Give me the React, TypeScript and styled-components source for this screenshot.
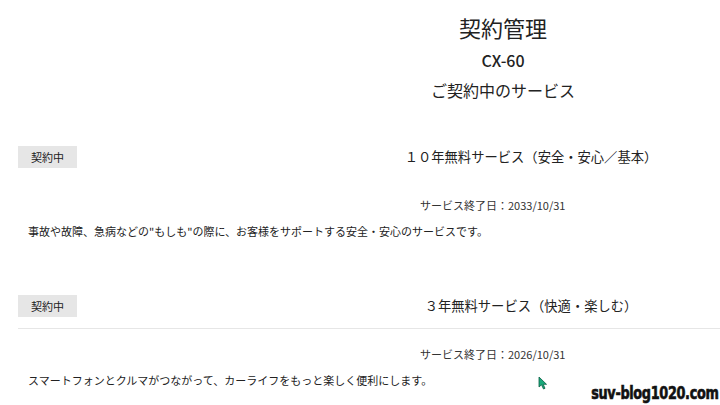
import styled, { createGlobalStyle } from "styled-components";

const GlobalStyle = createGlobalStyle`
  html, body {
    margin: 0;
    padding: 0;
    background: #fff;
  }
  body {
    font-family: "Noto Sans CJK JP", "Noto Sans", sans-serif;
    color: #222;
  }
`;

const Page = styled.div`
  position: relative;
  width: 720px;
  height: 405px;
  overflow: hidden;
  background: #fff;
`;

const Header = styled.header`
  display: flex;
  flex-direction: column;
  align-items: center;
  padding: 14px 0 0 286px;
`;

const Title = styled.h1`
  margin: 0;
  font-size: 22px;
  line-height: 26px;
  font-weight: 400;
`;

const Model = styled.div`
  margin-top: 9px;
  font-family: "Noto Sans CJK JP", "Noto Sans", sans-serif;
  font-size: 16px;
  line-height: 22px;
  font-weight: 500;
`;

const Subtitle = styled.h2`
  margin: 7px 0 0;
  font-size: 16px;
  line-height: 24px;
  font-weight: 400;
`;

const Services = styled.div`
  display: flex;
  flex-direction: column;
  gap: 56px;
  margin-top: 44px;
`;

const Service = styled.section`
  display: flex;
  flex-direction: column;
`;

const ServiceHead = styled.div<{ $divided?: boolean }>`
  display: flex;
  align-items: center;
  margin-left: 18px;
  padding-bottom: 11px;
  border-bottom: 1px solid ${(p) => (p.$divided ? "#e6e6e6" : "transparent")};
`;

const Badge = styled.span`
  display: flex;
  align-items: center;
  justify-content: center;
  width: 59px;
  height: 22px;
  background: #e6e6e6;
  font-size: 11px;
  color: #222;
`;

const ServiceName = styled.div`
  flex: 1;
  padding-left: 265px;
  text-align: center;
  font-size: 13.3px;
  line-height: 22px;
`;

const EndDate = styled.div`
  margin-top: 17px;
  padding-left: 420px;
  font-size: 11px;
  line-height: 16px;
  color: #333;
`;

const Description = styled.p`
  margin: 10px 0 0;
  padding-left: 28px;
  font-size: 11px;
  line-height: 16px;
`;

const Watermark = styled.div`
  position: absolute;
  right: 2px;
  bottom: 2px;
  font-family: "DejaVu Sans Condensed", "DejaVu Sans", sans-serif;
  font-weight: 700;
  font-size: 17px;
  letter-spacing: -0.4px;
  color: #111;
  -webkit-text-stroke: 0.6px #111;
  transform: scaleX(0.84);
  transform-origin: right bottom;
  text-shadow: 1px 1px 0 #fff, -1px -1px 0 #fff, 1px -1px 0 #fff, -1px 1px 0 #fff;
`;

const Cursor = styled.svg`
  position: absolute;
  left: 538px;
  top: 376px;
`;

const services = [
  {
    name: "１０年無料サービス（安全・安心／基本）",
    end: "2033/10/31",
    text: "事故や故障、急病などの\"もしも\"の際に、お客様をサポートする安全・安心のサービスです。",
    divided: false,
  },
  {
    name: "３年無料サービス（快適・楽しむ）",
    end: "2026/10/31",
    text: "スマートフォンとクルマがつながって、カーライフをもっと楽しく便利にします。",
    divided: true,
  },
];

export default function App() {
  return (
    <Page>
      <GlobalStyle />
      <Header>
        <Title>契約管理</Title>
        <Model>CX-60</Model>
        <Subtitle>ご契約中のサービス</Subtitle>
      </Header>
      <Services>
        {services.map((s) => (
          <Service key={s.name}>
            <ServiceHead $divided={s.divided}>
              <Badge>契約中</Badge>
              <ServiceName>{s.name}</ServiceName>
            </ServiceHead>
            <EndDate>サービス終了日：{s.end}</EndDate>
            <Description>{s.text}</Description>
          </Service>
        ))}
      </Services>
      <Cursor width="10" height="14" viewBox="0 0 10 14">
        <path d="M1 1 L1 11 L3.5 8.8 L5.5 13 L7 12.3 L5.2 8.3 L8.5 8.3 Z" fill="#18a87a" stroke="#0b5e44" strokeWidth="0.8" strokeLinejoin="round" />
      </Cursor>
      <Watermark>suv-blog1020.com</Watermark>
    </Page>
  );
}
